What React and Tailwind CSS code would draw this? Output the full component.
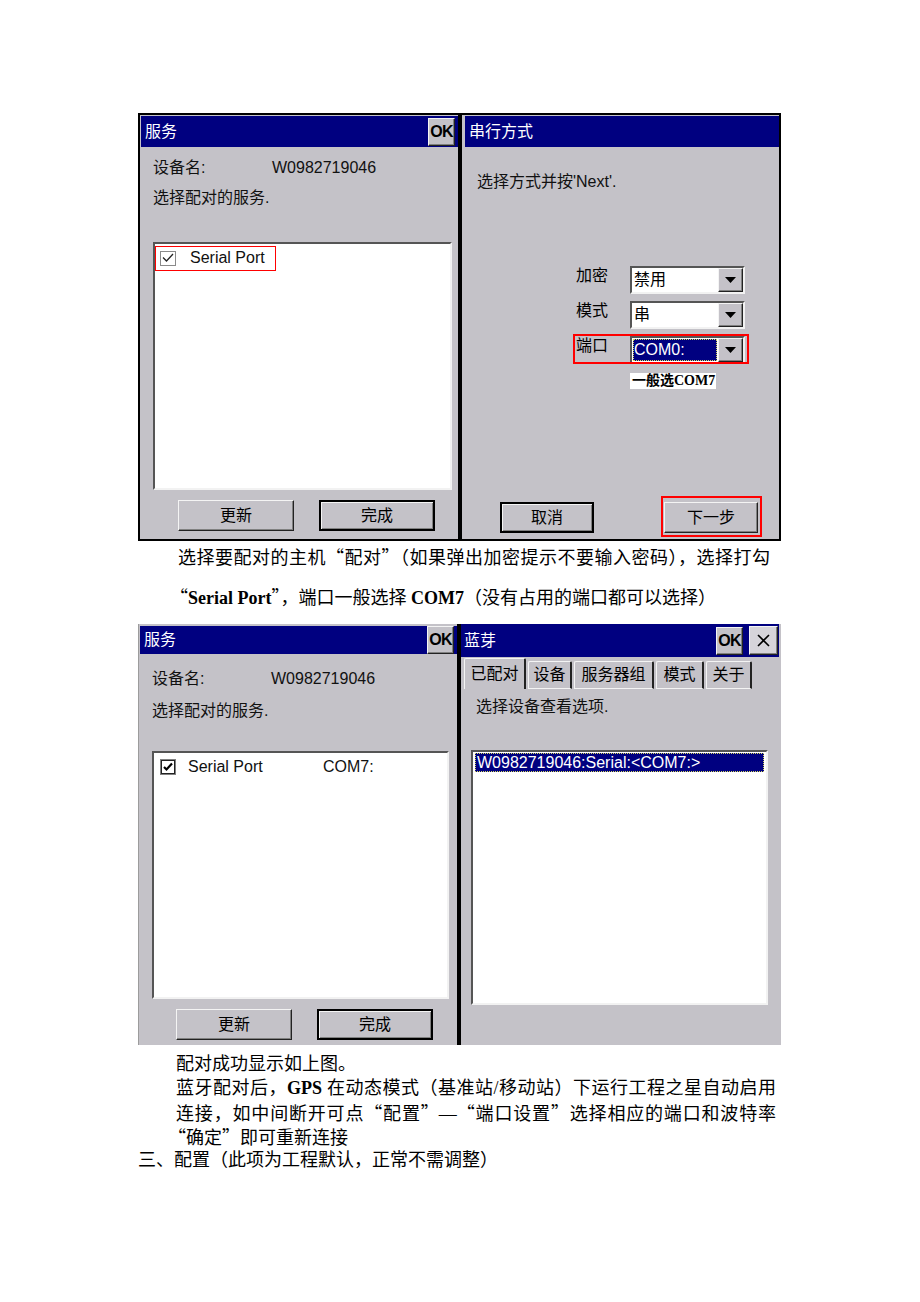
const ui = "font-['Liberation_Sans','Noto_Sans_CJK_SC',sans-serif]";
const doc = "font-['Liberation_Serif','Noto_Sans_CJK_SC',serif]";
const face = "bg-[#c4c2c8]";
const raised = "border border-t-[#f4f4f4] border-l-[#f4f4f4] border-r-[#222] border-b-[#222] shadow-[inset_-1px_-1px_0_#808080]";
const sunken = "border-2 border-t-[#555] border-l-[#555] border-r-[#f2f2f2] border-b-[#f2f2f2]";

// full-width CJK quotation marks
function Q({ children }) {
  return <span className="font-['Noto_Sans_CJK_SC',sans-serif]">{children}</span>;
}

function TitleBar({ title, children, height = "h-[31px]" }) {
  return (
    <div className={`flex ${height} items-center justify-between bg-[#000080] pl-[4px] pr-[3px]`}>
      <span className="text-[16px] leading-none text-white">{title}</span>
      <div className="flex items-center gap-[6px]">{children}</div>
    </div>
  );
}

function OkButton() {
  return (
    <div className={`flex h-[28px] w-[27px] items-center justify-center ${face} ${raised} text-[16px] font-bold leading-none tracking-tighter text-black`}>
      OK
    </div>
  );
}

function CloseButton() {
  return (
    <div className={`flex h-[29px] w-[29px] items-center justify-center bg-[#d6d4da] ${raised}`}>
      <svg width="13" height="13" viewBox="0 0 13 13">
        <path d="M1 1 L12 12 M12 1 L1 12" stroke="#000" strokeWidth="1.6" />
      </svg>
    </div>
  );
}

function PushButton({ label, isDefault, width = "w-[116px]" }) {
  const edge = isDefault
    ? "border-2 border-black shadow-[inset_1px_1px_0_#f4f4f4,inset_-1px_-1px_0_#808080]"
    : raised;
  return (
    <div className={`flex h-[31px] ${width} items-center justify-center ${face} ${edge} text-[16px] text-black`}>
      {label}
    </div>
  );
}

function CheckBox({ bold }) {
  if (bold) {
    return (
      <svg width="16" height="16" viewBox="0 0 16 16">
        <rect x="0.5" y="0.5" width="15" height="15" fill="#fff" stroke="#808080" />
        <rect x="1.5" y="1.5" width="13" height="13" fill="none" stroke="#222" />
        <path d="M4 8 L6.5 10.5 L12 4.5" fill="none" stroke="#000" strokeWidth="2.2" />
      </svg>
    );
  }
  return (
    <svg width="16" height="15" viewBox="0 0 16 15">
      <rect x="0.5" y="0.5" width="15" height="14" fill="#fff" stroke="#8a8a8a" />
      <path d="M3 6.5 L6.5 10 L13 3" fill="none" stroke="#222" strokeWidth="1.3" />
    </svg>
  );
}

function Arrow() {
  return (
    <svg width="11" height="6" viewBox="0 0 11 6">
      <polygon points="0,0 11,0 5.5,6" fill="#000" />
    </svg>
  );
}

function Combo({ value, focused }) {
  return (
    <div className={`flex h-[28px] w-[115px] ${sunken} bg-white`}>
      <div className="flex flex-1 items-center p-[1px]">
        {focused ? (
          <span className="flex h-full w-full items-center bg-[#000080] pl-[1px] text-[16px] leading-none text-white outline-1 outline-dotted outline-offset-[-1px] outline-[#d8d860]">
            {value}
          </span>
        ) : (
          <span className="pl-[1px] text-[16px] leading-none text-black">{value}</span>
        )}
      </div>
      <div className={`flex w-[25px] items-center justify-center ${face} ${raised}`}>
        <Arrow />
      </div>
    </div>
  );
}

function FieldRow({ label, children }) {
  return (
    <div className="flex items-start">
      <span className="w-[54px] text-[16px] leading-[20px] text-black">{label}</span>
      {children}
    </div>
  );
}

function Tab({ label, width, selected }) {
  const shape = selected
    ? "h-[31px] border-t border-l border-t-[#f4f4f4] border-l-[#f4f4f4] border-r-2 border-r-[#222]"
    : "h-[28px] border-t border-l border-b border-t-[#f4f4f4] border-l-[#f4f4f4] border-b-[#f4f4f4] border-r-2 border-r-[#222]";
  return (
    <div className={`flex ${width} ${shape} items-center justify-center rounded-t-[2px] ${face} text-[16px] leading-none text-black`}>
      {label}
    </div>
  );
}

function ServicePanel({ paired, compact }) {
  return (
    <div className={`flex w-[318px] flex-col ${compact ? "pt-[2px] pl-[1px]" : "pt-px pl-px"} pb-[8px]`}>
      <TitleBar title="服务" height={compact ? "h-[30px]" : "h-[31px]"}>
        <OkButton />
      </TitleBar>
      <div className={`flex flex-col ${compact ? "pl-[12px] mt-[10px]" : "pl-[12px] mt-[6px]"}`}>
        <div className="flex h-[30px] items-center text-[16px] text-[#111]">
          <span className="w-[119px]">设备名:</span>
          <span>W0982719046</span>
        </div>
        <div className={`flex h-[30px] items-center text-[16px] text-[#111] ${compact ? "mt-[2px]" : ""}`}>选择配对的服务.</div>
        <div className={`${compact ? "mt-[25px] w-[297px]" : "mt-[29px] w-[299px]"} h-[248px] ${sunken} bg-white`}>
          {paired ? (
            <div className="mt-[4px] flex h-[20px] items-center pl-[6px] text-[16px] text-[#111]">
              <CheckBox bold />
              <span className="ml-[12px] w-[135px]">Serial Port</span>
              <span>COM7:</span>
            </div>
          ) : (
            <div className="relative mt-[5px] flex h-[18px] items-center pl-[5px] text-[16px] text-[#111]">
              <CheckBox />
              <span className="ml-[14px]">Serial Port</span>
              <div className="absolute -top-[3px] left-0 h-[25px] w-[121px] border border-[#f00]" />
            </div>
          )}
        </div>
        <div className={`mt-[10px] flex ${compact ? "pl-[24px]" : "pl-[25px]"} gap-[25px]`}>
          <PushButton label="更新" />
          <PushButton label="完成" isDefault />
        </div>
      </div>
    </div>
  );
}

function SerialPanel() {
  return (
    <div className="flex flex-1 flex-col pt-px pl-[3px] pb-[6px]">
      <TitleBar title="串行方式" />
      <div className="mt-[20px] flex h-[30px] items-center pl-[12px] text-[16px] text-[#111]">选择方式并按'Next'.</div>
      <div className="mt-[69px] flex flex-col gap-[7px] pl-[111px]">
        <FieldRow label="加密">
          <Combo value="禁用" />
        </FieldRow>
        <FieldRow label="模式">
          <Combo value="串" />
        </FieldRow>
        <div className="relative">
          <FieldRow label="端口">
            <Combo value="COM0:" focused />
          </FieldRow>
          <div className="absolute -top-[2px] -left-[3px] h-[30px] w-[176px] border-2 border-[#f00]" />
        </div>
        <div className={`${doc} ml-[54px] mt-[2px] h-[16px] w-[86px] bg-white pl-[2px] text-[14px] font-bold leading-[16px] text-black`}>
          一般选COM7
        </div>
      </div>
      <div className="mt-auto flex pl-[35px]">
        <PushButton label="取消" isDefault width="w-[94px]" />
        <div className="relative ml-[70px]">
          <PushButton label="下一步" width="w-[94px]" />
          <div className="absolute -top-[6px] -left-[3px] -right-[4px] -bottom-[4px] border-2 border-[#f00]" />
        </div>
      </div>
    </div>
  );
}

function BluetoothPanel() {
  return (
    <div className="flex flex-1 flex-col pl-0 pr-[2px]">
      <div className="flex h-[33px] items-center justify-between bg-[#000080] pl-[3px] pr-[1px]">
        <span className="text-[16px] leading-none text-white">蓝芽</span>
        <div className="flex items-center gap-[6px]">
          <OkButton />
          <CloseButton />
        </div>
      </div>
      <div className="flex h-[32px] items-end gap-[2px] pl-[3px]">
        <Tab label="已配对" width="w-[62px]" selected />
        <Tab label="设备" width="w-[44px]" />
        <Tab label="服务器组" width="w-[80px]" />
        <Tab label="模式" width="w-[48px]" />
        <Tab label="关于" width="w-[46px]" />
      </div>
      <div className="mt-[3px] flex h-[30px] items-center pl-[15px] text-[16px] text-[#111]">选择设备查看选项.</div>
      <div className={`ml-[10px] mt-[28px] h-[255px] w-[297px] ${sunken} bg-white`}>
        <div className="mx-[2px] mt-px flex h-[19px] items-center bg-[#000080] pl-[2px] text-[16px] leading-none text-white outline-1 outline-dotted outline-offset-[-1px] outline-[#d8d860]">
          W0982719046:Serial:&lt;COM7:&gt;
        </div>
      </div>
    </div>
  );
}

export default function App() {
  return (
    <div className="min-h-[1302px] w-[920px] bg-white">
      <div className="ml-[138px] flex flex-col pt-[113px]">
        <section className={`${ui} flex h-[428px] w-[643px] border-2 border-black ${face}`}>
          <ServicePanel />
          <div className="w-[4px] bg-black" />
          <SerialPanel />
        </section>

        <p className={`${doc} ml-[40px] h-[30px] w-[592px] text-justify text-[18px] leading-[30px] text-black [text-align-last:justify]`}>
          选择要配对的主机<Q>“</Q>配对<Q>”</Q>（如果弹出加密提示不要输入密码），选择打勾
        </p>
        <p className={`${doc} ml-[32px] mt-[10px] h-[30px] text-[18px] leading-[30px] text-black`}>
          <Q>“</Q><b>Serial Port</b><Q>”</Q>，端口一般选择 <b>COM7</b>（没有占用的端口都可以选择）
        </p>

        <section className={`${ui} mt-[13px] flex h-[421px] w-[643px] border-l border-[#9c9c9c] ${face}`}>
          <ServicePanel paired compact />
          <div className="w-[4px] bg-black" />
          <BluetoothPanel />
        </section>

        <div className={`${doc} mt-[7px] flex flex-col text-[18px] leading-[24px] text-black`}>
          <p className="ml-[38px] h-[24px]">配对成功显示如上图。</p>
          <p className="ml-[38px] h-[24px] w-[600px] text-justify [text-align-last:justify]">
            蓝牙配对后，<b>GPS</b> 在动态模式（基准站/移动站）下运行工程之星自动启用
          </p>
          <p className="ml-[38px] h-[24px] w-[600px] text-justify [text-align-last:justify]">
            连接，如中间断开可点<Q>“</Q>配置<Q>”</Q>—<Q>“</Q>端口设置<Q>”</Q>选择相应的端口和波特率
          </p>
          <p className="ml-[30px] h-[24px]"><Q>“</Q>确定<Q>”</Q>即可重新连接</p>
          <p className="h-[24px]">三、配置（此项为工程默认，正常不需调整）</p>
        </div>
      </div>
    </div>
  );
}
